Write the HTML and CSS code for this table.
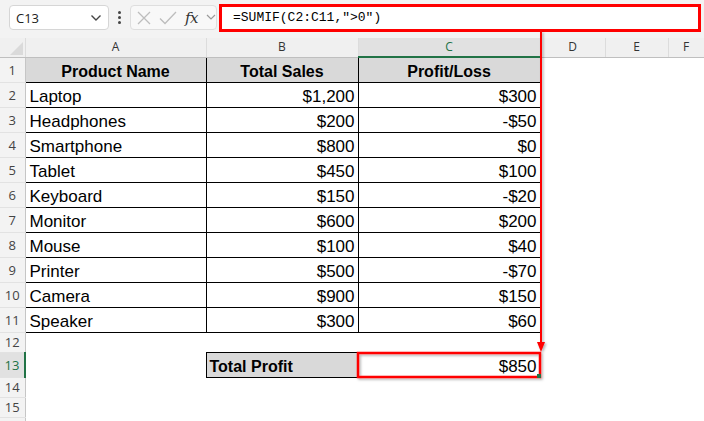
FILE: index.html
```html
<!DOCTYPE html>
<html>
<head>
<meta charset="utf-8">
<link rel="stylesheet" href="styles.css">
</head>
<body>
<div class="app">
  <div class="toolbar">
    <div class="namebox">
      <span class="name">C13</span>
      <svg class="chev" width="12" height="8" viewBox="0 0 12 8"><path d="M1.5 1.5 L6 6 L10.5 1.5" fill="none" stroke="#444" stroke-width="1.4"/></svg>
    </div>
    <div class="dots"><span></span><span></span><span></span></div>
    <div class="fxbox">
      <svg width="14" height="14" viewBox="0 0 14 14"><path d="M1 1 L13 13 M13 1 L1 13" stroke="#bdbdbd" stroke-width="1.3" fill="none"/></svg>
      <svg width="18" height="14" viewBox="0 0 18 14"><path d="M1 7.5 L6 12.5 L17 1" stroke="#bdbdbd" stroke-width="1.3" fill="none"/></svg>
      <span class="fx">fx</span>
      <svg width="10" height="7" viewBox="0 0 10 7"><path d="M1 1 L5 5 L9 1" fill="none" stroke="#9a9a9a" stroke-width="1.2"/></svg>
    </div>
    <div class="formula">=SUMIF(C2:C11,"&gt;0")</div>
  </div>

  <table class="sheet">
    <colgroup>
      <col class="c-rh"><col class="c-a"><col class="c-b"><col class="c-c"><col class="c-d"><col class="c-e"><col class="c-f">
    </colgroup>
    <tr class="colhead">
      <th class="corner"><span class="tri"></span></th>
      <th>A</th><th>B</th><th class="sel">C</th><th>D</th><th>E</th><th>F</th>
    </tr>
    <tr class="r25"><th class="rh">1</th><td class="hd">Product Name</td><td class="hd">Total Sales</td><td class="hd">Profit/Loss</td><td class="e"></td><td class="e"></td><td class="e"></td></tr>
    <tr class="r25"><th class="rh">2</th><td class="t">Laptop</td><td class="n">$1,200</td><td class="n">$300</td><td class="e"></td><td class="e"></td><td class="e"></td></tr>
    <tr class="r25"><th class="rh">3</th><td class="t">Headphones</td><td class="n">$200</td><td class="n">-$50</td><td class="e"></td><td class="e"></td><td class="e"></td></tr>
    <tr class="r25"><th class="rh">4</th><td class="t">Smartphone</td><td class="n">$800</td><td class="n">$0</td><td class="e"></td><td class="e"></td><td class="e"></td></tr>
    <tr class="r25"><th class="rh">5</th><td class="t">Tablet</td><td class="n">$450</td><td class="n">$100</td><td class="e"></td><td class="e"></td><td class="e"></td></tr>
    <tr class="r25"><th class="rh">6</th><td class="t">Keyboard</td><td class="n">$150</td><td class="n">-$20</td><td class="e"></td><td class="e"></td><td class="e"></td></tr>
    <tr class="r25"><th class="rh">7</th><td class="t">Monitor</td><td class="n">$600</td><td class="n">$200</td><td class="e"></td><td class="e"></td><td class="e"></td></tr>
    <tr class="r25"><th class="rh">8</th><td class="t">Mouse</td><td class="n">$100</td><td class="n">$40</td><td class="e"></td><td class="e"></td><td class="e"></td></tr>
    <tr class="r25"><th class="rh">9</th><td class="t">Printer</td><td class="n">$500</td><td class="n">-$70</td><td class="e"></td><td class="e"></td><td class="e"></td></tr>
    <tr class="r25"><th class="rh">10</th><td class="t">Camera</td><td class="n">$900</td><td class="n">$150</td><td class="e"></td><td class="e"></td><td class="e"></td></tr>
    <tr class="r25"><th class="rh">11</th><td class="t">Speaker</td><td class="n">$300</td><td class="n">$60</td><td class="e"></td><td class="e"></td><td class="e"></td></tr>
    <tr class="r20"><th class="rh">12</th><td class="e"></td><td class="e"></td><td class="e"></td><td class="e"></td><td class="e"></td><td class="e"></td></tr>
    <tr class="r25"><th class="rh rsel">13</th><td class="e"></td><td class="total">Total Profit</td><td class="n result">$850</td><td class="e"></td><td class="e"></td><td class="e"></td></tr>
    <tr class="r20"><th class="rh">14</th><td class="e"></td><td class="e"></td><td class="e"></td><td class="e"></td><td class="e"></td><td class="e"></td></tr>
    <tr class="r20"><th class="rh">15</th><td class="e"></td><td class="e"></td><td class="e"></td><td class="e"></td><td class="e"></td><td class="e"></td></tr>
    <tr class="r20"><th class="rh"></th><td class="e"></td><td class="e"></td><td class="e"></td><td class="e"></td><td class="e"></td><td class="e"></td></tr>
  </table>

  <svg class="overlay" width="704" height="421" viewBox="0 0 704 421">
    <defs>
      <filter id="sh" x="-10%" y="-10%" width="130%" height="130%">
        <feDropShadow dx="1.5" dy="1.5" stdDeviation="1.2" flood-color="#000" flood-opacity="0.3"/>
      </filter>
    </defs>
    <g filter="url(#sh)">
      <line x1="541" y1="31" x2="541" y2="344" stroke="#f00" stroke-width="2"/>
      <polygon points="537,342 545,342 541,352" fill="#f00"/>
      <rect x="358" y="353" width="182" height="24" fill="none" stroke="#f00" stroke-width="2.5"/>
    </g>
    <rect x="537" y="374" width="4" height="4" fill="#217346"/>
  </svg>
</div>
</body>
</html>
```

FILE: styles.css
```css
* { box-sizing: border-box; }
html, body { margin: 0; padding: 0; background: #fff; }
.app {
  position: relative;
  width: 704px;
  height: 421px;
  overflow: hidden;
  font-family: "Liberation Sans", Arial, sans-serif;
}
.toolbar {
  height: 38px;
  background: #f3f3f3;
  display: flex;
  align-items: flex-start;
  padding: 4px 3px 0 9px;
}
.namebox {
  margin-top: 1px;
  width: 100px;
  height: 25px;
  background: #fff;
  border: 1px solid #d6d6d6;
  border-radius: 4px;
  display: flex;
  align-items: center;
  justify-content: space-between;
  padding: 0 6px 0 6px;
  font-family: "Open Sans", "Liberation Sans", sans-serif;
  font-size: 13px;
  color: #222;
}
.dots {
  width: 21px;
  height: 27px;
  display: flex;
  flex-direction: column;
  align-items: center;
  justify-content: center;
  gap: 2px;
}
.dots span { width: 3px; height: 3px; border-radius: 50%; background: #444; }
.fxbox {
  margin-top: 1px;
  width: 87px;
  height: 25px;
  border: 1px solid #dedede;
  border-radius: 4px;
  background: #f8f8f8;
  display: flex;
  align-items: center;
  gap: 8px;
  padding-left: 6px;
}
.fx {
  font-family: "DejaVu Serif", "Liberation Serif", serif;
  font-style: italic;
  font-size: 15px;
  color: #333;
  letter-spacing: -0.5px;
}
.formula {
  flex: 1;
  margin-left: 2px;
  height: 28px;
  border: 3px solid #f00;
  background: #fff;
  font-family: "Liberation Mono", monospace;
  font-size: 13px;
  color: #000;
  padding-left: 11px;
  line-height: 22px;
}

.sheet {
  border-collapse: collapse;
  table-layout: fixed;
  width: 704px;
}
.c-rh { width: 25px; }
.c-a { width: 181px; }
.c-b { width: 152px; }
.c-c { width: 182px; }
.c-d { width: 65px; }
.c-e { width: 63px; }
.c-f { width: 36px; }

.colhead th {
  height: 19px;
  padding: 0;
  background: #f0f0f0;
  border-right: 1px solid #dcdcdc;
  border-bottom: 1px solid #bfbfbf;
  font-family: "Open Sans", "Liberation Sans", sans-serif;
  font-weight: normal;
  font-size: 12px;
  color: #333;
  text-align: center;
  line-height: 18px;
}
.colhead th.sel {
  background: #e1e1e1;
  color: #217346;
  border-bottom: 2px solid #217346;
}
.corner { position: relative; }
.tri {
  position: absolute;
  right: 2px;
  bottom: 2px;
  width: 0;
  height: 0;
  border-left: 13px solid transparent;
  border-bottom: 13px solid #dadada;
}
.rh {
  padding: 0;
  background: #f3f3f3;
  border-right: 1px solid #c6c6c6;
  border-bottom: 1px solid #e2e2e2;
  font-family: "Open Sans", "Liberation Sans", sans-serif;
  font-weight: normal;
  font-size: 13px;
  color: #444;
  text-align: center;
}
.rh.rsel {
  background: #e1e1e1;
  color: #217346;
  border-right: 2px solid #217346;
}
.r25 td, .r25 th { height: 25px; }
.r20 td, .r20 th { height: 20px; }
td {
  padding: 0 4px;
  font-size: 17px;
  color: #000;
  white-space: nowrap;
  overflow: hidden;
  line-height: 20px;
  vertical-align: bottom;
}
td.e { border: none; }
td.hd {
  background: #d9d9d9;
  border: 1px solid #000;
  font-weight: bold;
  font-size: 16px;
  text-align: center;
}
td.t { border: 1px solid #000; text-align: left; }
td.n { border: 1px solid #000; text-align: right; padding-right: 3px; }
td.total {
  background: #d9d9d9;
  border: 1px solid #000;
  font-weight: bold;
  font-size: 16px;
  padding-left: 3px;
}
td.result { border: 1px solid #000; }

.overlay {
  position: absolute;
  left: 0;
  top: 0;
  pointer-events: none;
}
```
